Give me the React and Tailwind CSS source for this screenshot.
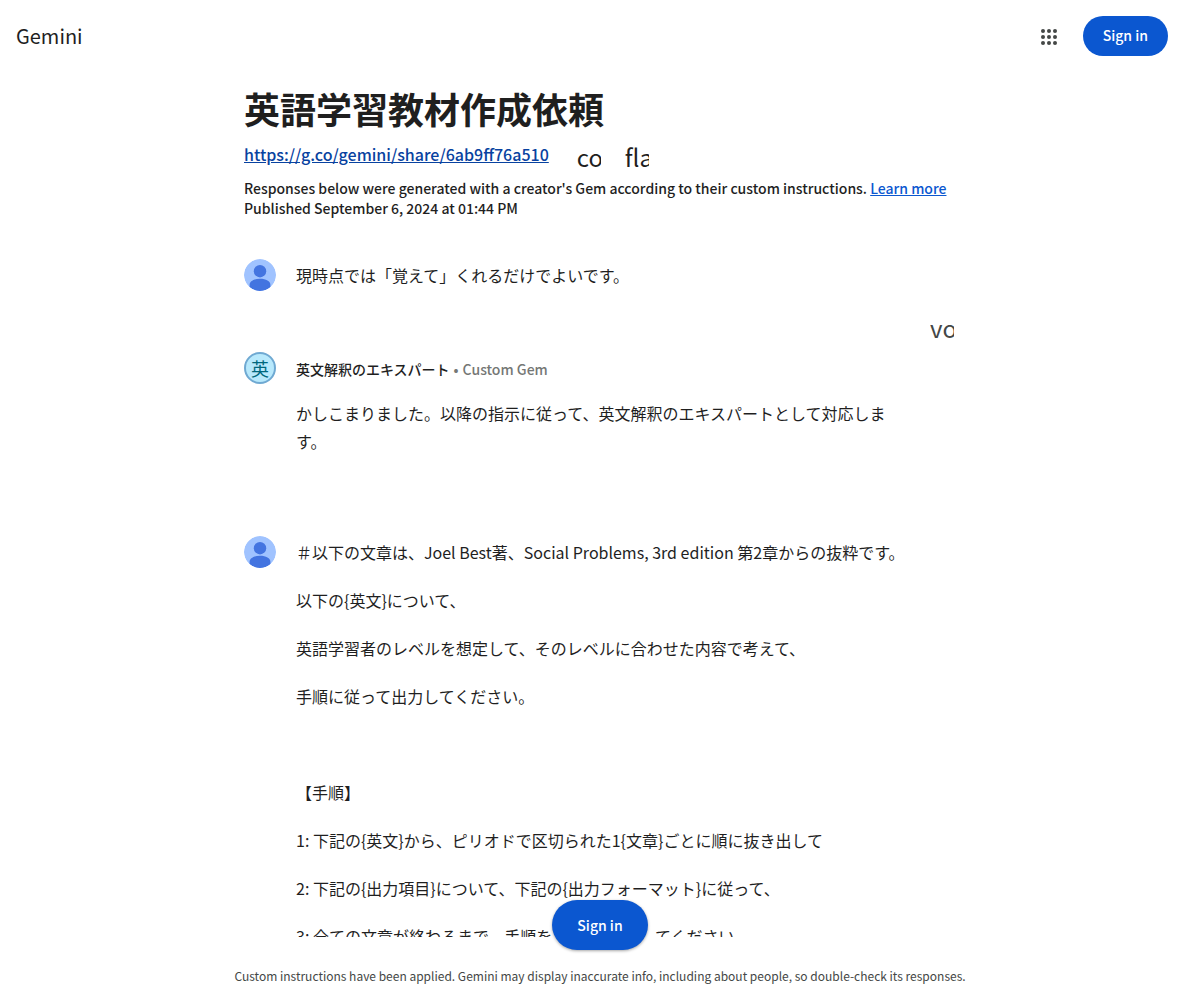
import React from 'react';

const PROMPT_LINES = [
  '＃以下の文章は、Joel Best著、Social Problems, 3rd edition 第2章からの抜粋です。',
  '以下の{英文}について、',
  '英語学習者のレベルを想定して、そのレベルに合わせた内容で考えて、',
  '手順に従って出力してください。',
  '',
  '【手順】',
  '1: 下記の{英文}から、ピリオドで区切られた1{文章}ごとに順に抜き出して',
  '2: 下記の{出力項目}について、下記の{出力フォーマット}に従って、',
  '3: 全ての文章が終わるまで、手順を1-2で繰り返してください。',
];

// --- ICONS ---
const AppsIcon = () => (
  <svg viewBox="0 0 24 24" className="size-6" fill="#444746" aria-hidden="true">
    {[6, 12, 18].map((y) => [6, 12, 18].map((x) => <circle key={`${x}-${y}`} cx={x} cy={y} r="2" />))}
  </svg>
);

const UserAvatar = () => (
  <svg viewBox="0 0 32 32" className="size-8 shrink-0 rounded-full" aria-hidden="true">
    <circle cx="16" cy="16" r="16" fill="#a0c3ff" />
    <circle cx="16" cy="12.2" r="6.2" fill="#4374e0" />
    <path d="M5.6 28.2v-2.4c0-3.6 4.4-6 10.4-6s10.4 2.4 10.4 6v2.4A16 16 0 0 1 16 32a16 16 0 0 1-10.4-3.8z" fill="#4374e0" />
  </svg>
);

// Ligature names clipped to the size of the glyph
const IconButton = ({ name, label }) => (
  <button aria-label={label} className="flex size-12 items-center justify-center">
    <span className="w-6 overflow-hidden pt-1 text-left text-2xl leading-6 whitespace-nowrap">{name}</span>
  </button>
);

const UserTurn = ({ lines }) => (
  <section className="flex gap-5">
    <UserAvatar />
    <div className="min-w-0 flex-1 pt-1">
      {lines.map((line, i) => (
        <p key={i} className="mb-6 min-h-6 leading-6">{line}</p>
      ))}
    </div>
  </section>
);

export default function App() {
  return (
    <div className="flex h-screen flex-col bg-white font-['Noto_Sans_CJK_JP',sans-serif] text-base text-[#1f1f1f]">
      {/* --- TOP BAR --- */}
      <header className="flex h-18 shrink-0 items-center justify-between pr-8 pl-4">
        <a href="#" className="text-xl leading-7">Gemini</a>
        <div className="flex items-center gap-[14px]">
          <button aria-label="Google apps" className="flex size-10 items-center justify-center rounded-full pt-0.5">
            <AppsIcon />
          </button>
          <button className="h-10 rounded-full bg-[#0b57d0] px-5 pb-0.5 text-sm font-medium text-white">Sign in</button>
        </div>
      </header>

      {/* --- CONVERSATION --- */}
      <main className="min-h-0 flex-1 overflow-hidden px-4">
        <div className="mx-auto max-w-[712px]">
          <h1 className="pt-3.5 text-4xl leading-11 font-bold">英語学習教材作成依頼</h1>
          <div className="flex h-12 items-center pt-0.5">
            <a href="#" className="mr-4 pb-0.5 leading-6 font-medium text-[#0842a0] underline">
              https://g.co/gemini/share/6ab9ff76a510
            </a>
            <IconButton name="content_copy" label="Copy link" />
            <IconButton name="flag" label="Report" />
          </div>
          <div className="text-sm leading-5 font-medium">
            <p>
              Responses below were generated with a creator's Gem according to their custom instructions.{' '}
              <a href="#" className="text-[#0b57d0] underline">Learn more</a>
            </p>
            <p>Published September 6, 2024 at 01:44 PM</p>
          </div>

          <div className="pt-[41px]">
            <UserTurn lines={['現時点では「覚えて」くれるだけでよいです。']} />
          </div>

          <div className="-mt-[9px] -mr-2.5 mb-0.5 flex justify-end text-[#444746]">
            <IconButton name="volume_up" label="Listen" />
          </div>

          <section className="flex gap-5">
            <div className="flex size-8 shrink-0 items-center justify-center rounded-full border-2 border-[#6fa9d2] bg-[#b8e9fc] text-lg leading-6 text-[#00677d]">
              英
            </div>
            <div className="max-w-[600px]">
              <p className="flex gap-1 pt-[7px] text-sm leading-5 font-medium">
                <span>英文解釈のエキスパート</span>
                <span className="text-[#757775]">•</span>
                <span className="text-[#757775]">Custom Gem</span>
              </p>
              <p className="pt-5 leading-7">かしこまりました。以降の指示に従って、英文解釈のエキスパートとして対応します。</p>
            </div>
          </section>

          <div className="pt-[81px]">
            <UserTurn lines={PROMPT_LINES} />
          </div>
        </div>
      </main>

      {/* --- FOOTER --- */}
      <footer className="relative flex h-[63px] shrink-0 items-center justify-center px-4 pt-[14px] text-center text-xs text-[#444746]">
        <button className="absolute bottom-[50px] left-1/2 h-[50px] w-24 -translate-x-1/2 rounded-full bg-[#0b57d0] text-sm font-medium text-white shadow-[0_1px_3px_rgba(0,0,0,0.35)]">
          Sign in
        </button>
        <p>Custom instructions have been applied. Gemini may display inaccurate info, including about people, so double-check its responses.</p>
      </footer>
    </div>
  );
}
